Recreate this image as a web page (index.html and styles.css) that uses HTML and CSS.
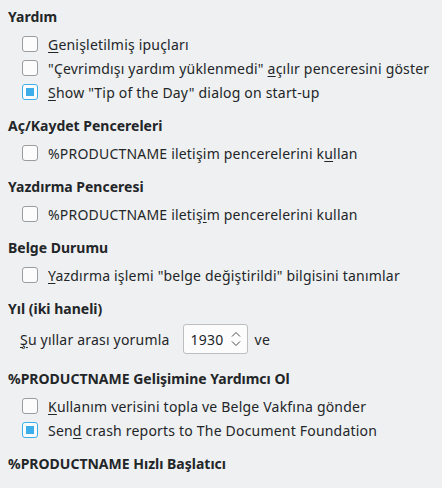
FILE: index.html
```html
<!DOCTYPE html>
<html lang="tr">
<head>
  <meta charset="UTF-8">
  <title>Genel</title>
  <link rel="stylesheet" href="styles.css">
</head>
<body>

  <div class="section">
    <h2>Yardım</h2>
    <div class="options">
      <label class="check"><span class="box"></span><span><u>G</u>enişletilmiş ipuçları</span></label>
      <label class="check"><span class="box"></span><span>"Çevrimdışı yardım yüklenmedi" <u>a</u>çılır penceresini göster</span></label>
      <label class="check"><span class="box on"></span><span><u>S</u>how "Tip of the Day" dialog on start-up</span></label>
    </div>
  </div>

  <div class="section">
    <h2>Aç/Kaydet Pencereleri</h2>
    <div class="options">
      <label class="check"><span class="box"></span><span>%PRODUCTNAME iletişim pencerelerini k<u>u</u>llan</span></label>
    </div>
  </div>

  <div class="section">
    <h2>Yazdırma Penceresi</h2>
    <div class="options">
      <label class="check"><span class="box"></span><span>%PRODUCTNAME iletiş<u>i</u>m pencerelerini kullan</span></label>
    </div>
  </div>

  <div class="section">
    <h2>Belge Durumu</h2>
    <div class="options">
      <label class="check"><span class="box"></span><span><u>Y</u>azdırma işlemi "belge değiştirildi" bilgisini tanımlar</span></label>
    </div>
  </div>

  <div class="section year">
    <h2>Yıl (iki haneli)</h2>
    <div class="year-row">
      <span><u>Ş</u>u yıllar arası yorumla</span>
      <div class="spin">
        <span class="spin-value">1930</span>
        <svg class="spin-arrows" width="10" height="20" viewBox="0 0 10 20">
          <path d="M1 7.5 L5 3.5 L9 7.5" fill="none" stroke="#4d4d4d" stroke-width="1"/>
          <path d="M1 12.5 L5 16.5 L9 12.5" fill="none" stroke="#4d4d4d" stroke-width="1"/>
        </svg>
      </div>
      <span>ve</span>
    </div>
  </div>

  <div class="section">
    <h2>%PRODUCTNAME Gelişimine Yardımcı Ol</h2>
    <div class="options">
      <label class="check"><span class="box"></span><span><u>K</u>ullanım verisini topla ve Belge Vakfına gönder</span></label>
      <label class="check"><span class="box on"></span><span>Sen<u>d</u> crash reports to The Document Foundation</span></label>
    </div>
  </div>

  <div class="section">
    <h2>%PRODUCTNAME Hızlı Başlatıcı</h2>
  </div>

</body>
</html>
```

FILE: styles.css
```css
* {
  margin: 0;
  padding: 0;
  box-sizing: border-box;
}

body {
  font-family: "Noto Sans", sans-serif;
  font-size: 14px;
  letter-spacing: 0.2px;
  background-color: #eff0f1;
  color: #232629;
  padding: 7px 8px;
}

u {
  text-decoration-thickness: 1px;
  text-underline-offset: 2px;
}

.section {
  margin-bottom: 12px;
}

.section.year {
  margin-bottom: 15px;
}

.section h2 {
  font-size: 14px;
  font-weight: bold;
  letter-spacing: 0;
  line-height: 20px;
}

.options {
  padding: 5px 0 0 14px;
}

.check {
  display: flex;
  align-items: center;
  height: 24px;
}

.box {
  width: 16px;
  height: 16px;
  border: 1px solid #9a9c9e;
  border-radius: 3px;
  background-color: #fcfcfc;
  margin-right: 10px;
  flex-shrink: 0;
  position: relative;
}

.box.on {
  border-color: #3daee9;
}

.box.on::after {
  content: '';
  position: absolute;
  left: 3px;
  top: 3px;
  width: 8px;
  height: 8px;
  background-color: #3daee9;
}

.year-row {
  display: flex;
  align-items: center;
  padding: 5px 0 0 12px;
}

.spin {
  display: flex;
  align-items: center;
  justify-content: space-between;
  width: 65px;
  height: 30px;
  margin: 0 7px 0 13px;
  padding: 0 6px 0 7px;
  background-color: #fcfcfc;
  border: 1px solid #bcbebf;
  border-radius: 3px;
}
```
